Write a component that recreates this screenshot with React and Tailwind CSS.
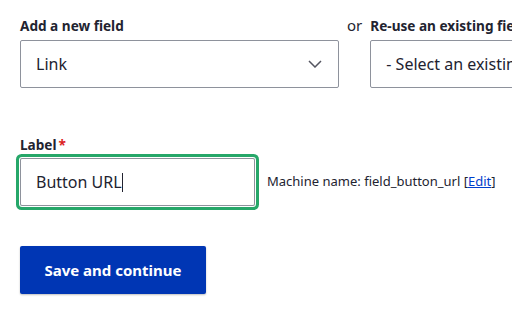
export default function App() {
  const font = { fontFamily: '"Noto Sans", sans-serif' };

  return (
    <div className="w-full h-[328px] overflow-hidden bg-white text-[#222330] pl-5 pt-[17px]" style={font}>
      {/* Field type row */}
      <div className="flex items-start">
        <div className="w-[319px] shrink-0">
          <label className="block text-[13.6px] leading-[18px] font-bold mb-[5px]">Add a new field</label>
          <div className="flex items-center justify-between h-12 border border-[#8e929c] rounded-[2px] pl-[15px] pr-4 text-[16px]">
            <span>Link</span>
            <svg width="14" height="8" viewBox="0 0 14 8" fill="none">
              <path d="M1 1l6 6 6-6" stroke="#545560" strokeWidth="1.5" />
            </svg>
          </div>
        </div>
        <div className="shrink-0 mx-2 text-[15px] leading-[18px] mt-[-1px]">or</div>
        <div className="w-[300px] shrink-0">
          <label className="block text-[13.6px] leading-[18px] font-bold mb-[5px] whitespace-nowrap">Re-use an existing field</label>
          <div className="flex items-center h-12 border border-[#8e929c] rounded-[2px] pl-[15px] text-[16px] whitespace-nowrap">
            - Select an existing field -
          </div>
        </div>
      </div>

      {/* Label row */}
      <div className="mt-12">
        <label className="block text-[13.6px] leading-[18px] font-bold mb-1">
          Label<span className="text-[#dc2323] ml-[2px]">*</span>
        </label>
        <div className="flex items-center">
          <div className="w-[235px] h-12 flex items-center border border-[#8e929c] rounded-[2px] pl-[15px] text-[16px] ring-[3px] ring-[#26a769] ring-offset-1">
            <span>Button URL</span>
            <span className="w-px h-[19px] bg-[#222330]" />
          </div>
          <div className="ml-3 text-[13px] whitespace-nowrap">
            Machine name: field_button_url [<a className="text-[#003ecc] underline" href="#">Edit</a>]
          </div>
        </div>
      </div>

      <button className="mt-10 h-12 w-[186px] rounded-[2px] bg-[#0036b4] text-white font-bold text-[15px] shadow-[0_1px_2px_rgba(0,0,0,0.25)]">
        Save and continue
      </button>
    </div>
  );
}
